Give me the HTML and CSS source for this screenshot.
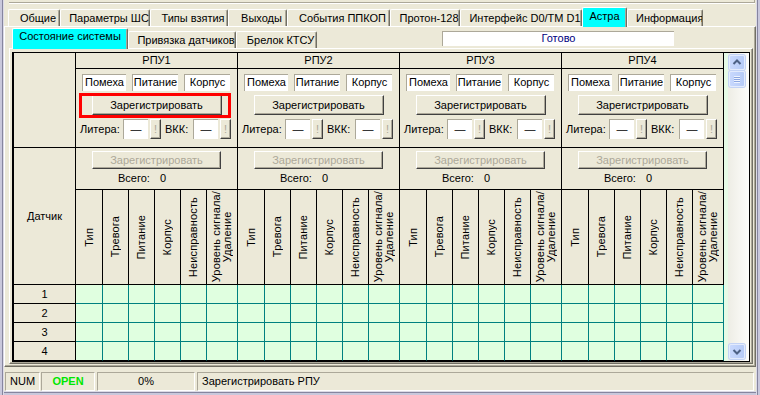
FILE: index.html
```html
<!DOCTYPE html>
<html lang="ru">
<head>
  <meta charset="UTF-8" />
  <title>Астра - Состояние системы</title>
  <link rel="stylesheet" href="styles.css">
</head>
<body>

  <div class="window">
    <div class="topstrip"><div class="topstrip-edge"></div></div>

    <!-- Main tabs -->
    <div class="tabs main-tabs">
      <div class="tab">Общие</div>
      <div class="tab">Параметры ШС</div>
      <div class="tab">Типы взятия</div>
      <div class="tab">Выходы</div>
      <div class="tab">События ППКОП</div>
      <div class="tab">Протон-128</div>
      <div class="tab">Интерфейс D0/TM D1</div>
      <div class="tab active">Астра</div>
      <div class="tab">Информация</div>
    </div>

    <div class="page outer-page">
      <!-- Astra sub tabs -->
      <div class="tabs sub-tabs">
        <div class="tab active">Состояние системы</div>
        <div class="tab">Привязка датчиков</div>
        <div class="tab">Брелок КТСУ</div>
        <div class="state">Готово</div>
      </div>

      <div class="page inner-page">
        <div class="view">
          <div class="grid">
            <div class="cell corner"></div>
            <div class="cell rpu-head">РПУ1</div>
            <div class="cell rpu-head">РПУ2</div>
            <div class="cell rpu-head">РПУ3</div>
            <div class="cell rpu-head">РПУ4</div>

            <!-- RPU controls -->
            <div class="cell ctl">
              <div class="flags"><span class="flag">Помеха</span><span class="flag">Питание</span><span class="flag">Корпус</span></div>
              <button class="btn reg">Зарегистрировать</button>
              <div class="lit-row"><span class="lit-label">Литера:</span><span class="field">—</span><button class="btn mini" disabled>!</button><span class="vkk-label">ВКК:</span><span class="field">—</span><button class="btn mini" disabled>!</button></div>
              <div class="mark"></div>
            </div>
            <div class="cell ctl">
              <div class="flags"><span class="flag">Помеха</span><span class="flag">Питание</span><span class="flag">Корпус</span></div>
              <button class="btn reg">Зарегистрировать</button>
              <div class="lit-row"><span class="lit-label">Литера:</span><span class="field">—</span><button class="btn mini" disabled>!</button><span class="vkk-label">ВКК:</span><span class="field">—</span><button class="btn mini" disabled>!</button></div>
            </div>
            <div class="cell ctl">
              <div class="flags"><span class="flag">Помеха</span><span class="flag">Питание</span><span class="flag">Корпус</span></div>
              <button class="btn reg">Зарегистрировать</button>
              <div class="lit-row"><span class="lit-label">Литера:</span><span class="field">—</span><button class="btn mini" disabled>!</button><span class="vkk-label">ВКК:</span><span class="field">—</span><button class="btn mini" disabled>!</button></div>
            </div>
            <div class="cell ctl">
              <div class="flags"><span class="flag">Помеха</span><span class="flag">Питание</span><span class="flag">Корпус</span></div>
              <button class="btn reg">Зарегистрировать</button>
              <div class="lit-row"><span class="lit-label">Литера:</span><span class="field">—</span><button class="btn mini" disabled>!</button><span class="vkk-label">ВКК:</span><span class="field">—</span><button class="btn mini" disabled>!</button></div>
            </div>

            <div class="cell sensor">Датчик</div>

            <!-- Sensor registration -->
            <div class="cell band"><button class="btn reg-off" disabled>Зарегистрировать</button><div class="total"><span class="total-label">Всего:</span><span>0</span></div></div>
            <div class="cell band"><button class="btn reg-off" disabled>Зарегистрировать</button><div class="total"><span class="total-label">Всего:</span><span>0</span></div></div>
            <div class="cell band"><button class="btn reg-off" disabled>Зарегистрировать</button><div class="total"><span class="total-label">Всего:</span><span>0</span></div></div>
            <div class="cell band"><button class="btn reg-off" disabled>Зарегистрировать</button><div class="total"><span class="total-label">Всего:</span><span>0</span></div></div>

            <!-- Column headers -->
            <div class="cell vh"><span>Тип</span></div>
            <div class="cell vh"><span>Тревога</span></div>
            <div class="cell vh"><span>Питание</span></div>
            <div class="cell vh"><span>Корпус</span></div>
            <div class="cell vh"><span>Неисправность</span></div>
            <div class="cell vh"><span>Уровень сигнала/<br>Удаление</span></div>
            <div class="cell vh"><span>Тип</span></div>
            <div class="cell vh"><span>Тревога</span></div>
            <div class="cell vh"><span>Питание</span></div>
            <div class="cell vh"><span>Корпус</span></div>
            <div class="cell vh"><span>Неисправность</span></div>
            <div class="cell vh"><span>Уровень сигнала/<br>Удаление</span></div>
            <div class="cell vh"><span>Тип</span></div>
            <div class="cell vh"><span>Тревога</span></div>
            <div class="cell vh"><span>Питание</span></div>
            <div class="cell vh"><span>Корпус</span></div>
            <div class="cell vh"><span>Неисправность</span></div>
            <div class="cell vh"><span>Уровень сигнала/<br>Удаление</span></div>
            <div class="cell vh"><span>Тип</span></div>
            <div class="cell vh"><span>Тревога</span></div>
            <div class="cell vh"><span>Питание</span></div>
            <div class="cell vh"><span>Корпус</span></div>
            <div class="cell vh"><span>Неисправность</span></div>
            <div class="cell vh"><span>Уровень сигнала/<br>Удаление</span></div>

            <!-- Rows -->
            <div class="cell row-num">1</div>
            <span class="cell d"></span><span class="cell d"></span><span class="cell d"></span><span class="cell d"></span><span class="cell d"></span><span class="cell d"></span><span class="cell d"></span><span class="cell d"></span><span class="cell d"></span><span class="cell d"></span><span class="cell d"></span><span class="cell d"></span><span class="cell d"></span><span class="cell d"></span><span class="cell d"></span><span class="cell d"></span><span class="cell d"></span><span class="cell d"></span><span class="cell d"></span><span class="cell d"></span><span class="cell d"></span><span class="cell d"></span><span class="cell d"></span><span class="cell d"></span>
            <div class="cell row-num">2</div>
            <span class="cell d"></span><span class="cell d"></span><span class="cell d"></span><span class="cell d"></span><span class="cell d"></span><span class="cell d"></span><span class="cell d"></span><span class="cell d"></span><span class="cell d"></span><span class="cell d"></span><span class="cell d"></span><span class="cell d"></span><span class="cell d"></span><span class="cell d"></span><span class="cell d"></span><span class="cell d"></span><span class="cell d"></span><span class="cell d"></span><span class="cell d"></span><span class="cell d"></span><span class="cell d"></span><span class="cell d"></span><span class="cell d"></span><span class="cell d"></span>
            <div class="cell row-num">3</div>
            <span class="cell d"></span><span class="cell d"></span><span class="cell d"></span><span class="cell d"></span><span class="cell d"></span><span class="cell d"></span><span class="cell d"></span><span class="cell d"></span><span class="cell d"></span><span class="cell d"></span><span class="cell d"></span><span class="cell d"></span><span class="cell d"></span><span class="cell d"></span><span class="cell d"></span><span class="cell d"></span><span class="cell d"></span><span class="cell d"></span><span class="cell d"></span><span class="cell d"></span><span class="cell d"></span><span class="cell d"></span><span class="cell d"></span><span class="cell d"></span>
            <div class="cell row-num">4</div>
            <span class="cell d"></span><span class="cell d"></span><span class="cell d"></span><span class="cell d"></span><span class="cell d"></span><span class="cell d"></span><span class="cell d"></span><span class="cell d"></span><span class="cell d"></span><span class="cell d"></span><span class="cell d"></span><span class="cell d"></span><span class="cell d"></span><span class="cell d"></span><span class="cell d"></span><span class="cell d"></span><span class="cell d"></span><span class="cell d"></span><span class="cell d"></span><span class="cell d"></span><span class="cell d"></span><span class="cell d"></span><span class="cell d"></span><span class="cell d"></span>
          </div>

          <div class="view-gap"></div>

          <!-- Vertical scrollbar -->
          <div class="scrollbar">
            <div class="sb-btn">
              <svg width="14" height="13" viewBox="0 0 14 13"><polyline points="3.5,8 7,4.5 10.5,8" fill="none" stroke="#4d6185" stroke-width="2"/></svg>
            </div>
            <div class="sb-thumb">
              <svg width="14" height="14" viewBox="0 0 14 14"><path d="M4 4.5h6M4 6.5h6M4 8.5h6M4 10.5h6" stroke="#eef3fe" stroke-width="1"/><path d="M4 5.5h6M4 7.5h6M4 9.5h6" stroke="#8ca6e0" stroke-width="1"/></svg>
            </div>
            <div class="sb-track"></div>
            <div class="sb-btn">
              <svg width="14" height="13" viewBox="0 0 14 13"><polyline points="3.5,5 7,8.5 10.5,5" fill="none" stroke="#4d6185" stroke-width="2"/></svg>
            </div>
          </div>
        </div>
      </div>
    </div>

    <!-- Status bar -->
    <div class="statusbar">
      <div class="panel num">NUM</div>
      <div class="panel open">OPEN</div>
      <div class="panel pct">0%</div>
      <div class="panel msg">Зарегистрировать РПУ</div>
    </div>
  </div>

</body>
</html>
```

FILE: styles.css
```css
/* Global */
* {
  box-sizing: border-box;
  margin: 0;
  padding: 0;
}

body {
  width: 760px;
  height: 395px;
  overflow: hidden;
  background: #ece9d8;
  font-family: "Liberation Sans", Arial, sans-serif;
  font-size: 11px;
  color: #000;
}

/* Window frame */
.window {
  width: 760px;
  height: 395px;
  padding: 0 4px 4px 4px;
  background: #ece9d8;
  box-shadow:
    inset 2px 0 0 #c9c8dc, inset 3px 0 0 #86859f, inset 4px 0 0 #dcdbe6,
    inset -2px 0 0 #c9c8dc, inset -3px 0 0 #86859f, inset -4px 0 0 #dcdbe6,
    inset 0 -2px 0 #c9c8dc, inset 0 -3px 0 #86859f, inset 0 -4px 0 #dcdbe6;
}

.topstrip {
  height: 7px;
  padding: 0 1px 0 5px;
}

.topstrip-edge {
  height: 3px;
  border-bottom: 1px solid #aca899;
  border-right: 1px solid #aca899;
  box-shadow: 0 1px 0 #fff;
}

/* Tabs */
.tabs {
  display: flex;
  align-items: flex-end;
}

.main-tabs {
  height: 19px;
  margin-left: 4px;
}

.sub-tabs {
  height: 20px;
  margin-left: 7px;
}

.tab {
  position: relative;
  height: 17px;
  padding-left: 8px;
  line-height: 16px;
  text-align: center;
  white-space: nowrap;
  overflow: hidden;
  background: #ece9d8;
  border-top: 1px solid #fff;
  border-left: 1px solid #fff;
  border-right: 1px solid #716f64;
  border-radius: 2px 2px 0 0;
  box-shadow: inset -1px 0 0 #aca899;
}

.tab.active {
  z-index: 1;
  padding-left: 0;
  background: #00ffff;
  margin-bottom: -1px;
}

.main-tabs .tab.active {
  height: 20px;
  line-height: 17px;
}

.sub-tabs .tab.active {
  height: 21px;
  line-height: 15px;
}

.main-tabs .tab:nth-child(1) { width: 52px; }
.main-tabs .tab:nth-child(2) { width: 90px; }
.main-tabs .tab:nth-child(3) { width: 78px; }
.main-tabs .tab:nth-child(4) { width: 59px; }
.main-tabs .tab:nth-child(5) { width: 103px; }
.main-tabs .tab:nth-child(6) { width: 70px; }
.main-tabs .tab:nth-child(7) { width: 122px; }
.main-tabs .tab:nth-child(8) { width: 45px; }
.main-tabs .tab:nth-child(9) { width: 76px; }

.sub-tabs .tab:nth-child(1) { width: 116px; }
.sub-tabs .tab:nth-child(2) { width: 108px; }
.sub-tabs .tab:nth-child(3) { width: 81px; }

.state {
  width: 232px;
  height: 15px;
  margin: 0 0 2px 125px;
  background: #fff;
  border-top: 1px solid #aca899;
  border-left: 1px solid #aca899;
  color: #000080;
  text-align: center;
  line-height: 13px;
}

/* Tab pages */
.page {
  border-top: 1px solid #fff;
  border-left: 1px solid #fff;
  border-right: 1px solid #716f64;
  border-bottom: 1px solid #716f64;
  box-shadow: inset -1px -1px 0 #aca899;
}

.outer-page {
  height: 341px;
  padding-top: 1px;
}

.inner-page {
  width: 744px;
  height: 316px;
  margin-left: 4px;
  padding: 3px 2px 1px 2px;
}

.view {
  display: flex;
  height: 310px;
  border: 1px solid #000;
  background: #fff;
}

/* Table */
.grid {
  display: grid;
  grid-template-columns: 62px repeat(4, 27px 26px 26px 26px 26px 31px);
  grid-template-rows: 16px 79px 42px 95px repeat(4, 19px);
  border-left: 1px solid #000;
}

.cell {
  background: #ece9d8;
  border-right: 1px solid #000;
  border-bottom: 1px solid #000;
}

.corner {
  grid-row: span 2;
}

.rpu-head {
  grid-column: span 6;
  text-align: center;
  line-height: 15px;
}

.ctl {
  grid-column: span 6;
  position: relative;
  display: flex;
  flex-direction: column;
  gap: 4px;
  padding-top: 5px;
}

.flags {
  display: flex;
  gap: 6px;
  padding-left: 6px;
}

.flag {
  height: 17px;
  background: #fff;
  border-top: 1px solid #aca899;
  border-left: 1px solid #aca899;
  text-align: center;
  line-height: 15px;
  white-space: nowrap;
}

.flag:nth-child(1) { width: 44px; }
.flag:nth-child(2) { width: 46px; }
.flag:nth-child(3) { width: 46px; }

.btn {
  font: inherit;
  color: #000;
  background: #ece9d8;
  border: 1px solid;
  border-color: #fff #404040 #404040 #fff;
  box-shadow: inset -1px -1px 0 #aca899;
  white-space: nowrap;
}

.btn:disabled {
  color: #aca899;
}

.reg {
  display: block;
  align-self: center;
  width: 130px;
  height: 20px;
  line-height: 17px;
}

.lit-row {
  display: flex;
  align-items: center;
  height: 20px;
  padding-left: 4px;
}

.lit-label {
  width: 43px;
}

.vkk-label {
  width: 28px;
  margin-left: 4px;
}

.field {
  width: 25px;
  height: 20px;
  background: #fff;
  border-top: 1px solid #aca899;
  border-left: 1px solid #aca899;
  text-align: center;
  line-height: 18px;
}

.mini {
  width: 11px;
  height: 20px;
  margin-left: 2px;
  line-height: 17px;
}

/* red highlight drawn over the first register button */
.mark {
  position: absolute;
  left: 3px;
  top: 24px;
  width: 152px;
  height: 25px;
  border: 3px solid #ff0000;
}

.sensor {
  grid-row: span 2;
  display: flex;
  align-items: center;
  justify-content: center;
}

.band {
  grid-column: span 6;
  display: flex;
  flex-direction: column;
  align-items: center;
  padding-top: 3px;
}

.reg-off {
  width: 129px;
  height: 18px;
  line-height: 15px;
}

.total {
  display: flex;
  align-self: stretch;
  margin-top: 3px;
  padding-left: 42px;
  line-height: 13px;
}

.total-label {
  width: 42px;
}

.vh {
  display: flex;
  align-items: center;
  justify-content: center;
}

.vh span {
  writing-mode: vertical-rl;
  transform: rotate(180deg);
  letter-spacing: 0.15px;
  line-height: 11px;
  text-align: center;
  white-space: nowrap;
}

.row-num {
  text-align: center;
  line-height: 18px;
}

.d {
  background: #e0ffe0;
  border-color: #008080;
}

.grid > .d:nth-last-child(-n+24) {
  border-bottom-color: #000;
}

.view-gap {
  width: 4px;
  background: #e6fbe6;
}

/* Scrollbar */
.scrollbar {
  width: 21px;
  display: flex;
  flex-direction: column;
  padding: 2px 4px 2px 1px;
  background: linear-gradient(to right, #eeede5, #fdfdfb);
}

.sb-btn,
.sb-thumb {
  width: 16px;
  height: 15px;
  display: flex;
  align-items: center;
  justify-content: center;
  background: linear-gradient(to right, #c8d8fd, #b6cbf7);
  border: 1px solid #e3ebfd;
  border-radius: 2px;
  box-shadow: 0 0 0 1px #c3d3f5;
}

.sb-thumb {
  height: 16px;
  margin-top: 1px;
}

.sb-track {
  flex: 1;
}

/* Status bar */
.statusbar {
  display: flex;
  height: 19px;
  margin-top: 5px;
  padding-left: 1px;
}

.panel {
  height: 19px;
  border-top: 1px solid #aca899;
  border-left: 1px solid #aca899;
  border-bottom: 1px solid #fff;
  border-right: 1px solid #fff;
  line-height: 17px;
  white-space: nowrap;
}

.num {
  width: 35px;
  padding-left: 4px;
}

.open {
  width: 54px;
  margin-left: 1px;
  text-align: center;
  font-weight: bold;
  color: #00e600;
}

.pct {
  width: 98px;
  margin-left: 2px;
  text-align: center;
}

.msg {
  width: 557px;
  margin-left: 2px;
  padding-left: 4px;
}
```
